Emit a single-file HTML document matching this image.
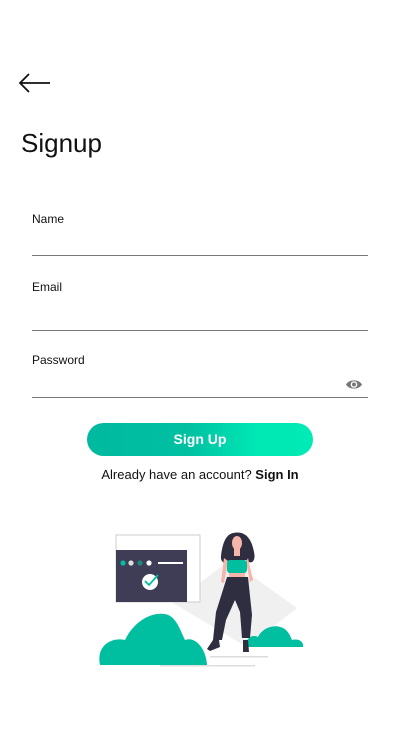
<!DOCTYPE html>
<html><head><style>
body{margin:0;width:400px;height:730px;background:#fff;font-family:"Liberation Sans",sans-serif;position:relative;overflow:hidden;color:#111}
.a{position:absolute}
.lbl{font-size:12px;left:32px}
.ln{left:32px;width:336px;height:1px;background:#777}
</style></head><body>
<svg class="a" style="left:18px;top:72px" width="34" height="22" viewBox="0 0 34 22"><path d="M32 11H2M11 2L2 11l9 9" fill="none" stroke="#111" stroke-width="1.8"/></svg>
<div class="a" style="left:21px;top:128px;font-size:26px;color:#111">Signup</div>
<div class="a lbl" style="top:212px">Name</div>
<div class="a ln" style="top:255px"></div>
<div class="a lbl" style="top:280px">Email</div>
<div class="a ln" style="top:330px"></div>
<div class="a lbl" style="top:353px">Password</div>
<svg class="a" style="left:345px;top:378px" width="18" height="13" viewBox="0 0 18 13"><path d="M1 6.5C4 1 14 1 17 6.5C14 12 4 12 1 6.5Z" fill="#777"/><circle cx="9" cy="6.5" r="3.3" fill="#fff"/><circle cx="9" cy="6.5" r="2" fill="#777"/></svg>
<div class="a ln" style="top:397px"></div>
<div class="a" style="left:87px;top:423px;width:226px;height:33px;border-radius:17px;background:linear-gradient(90deg,#00b9a0 0%,#00c0a2 45%,#00e8b4 75%,#00eab5 100%);color:#fff;font-weight:bold;font-size:14px;text-align:center;line-height:33px">Sign Up</div>
<div class="a" style="left:0;width:400px;top:467px;text-align:center;font-size:13px">Already have an account? <b>Sign In</b></div>
<svg class="a" style="left:0;top:0" width="400" height="730">
<polygon points="230,560 297,608 247,647 173,603" fill="#f0f0f0"/>
<rect x="116" y="535" width="84" height="67" fill="#fff" stroke="#ccc" stroke-width="1"/>
<rect x="116" y="550" width="71" height="52" fill="#3f3d56"/>
<circle cx="123" cy="563" r="2.6" fill="#00bfa0"/><circle cx="131" cy="563" r="2.6" fill="#ddd"/><circle cx="140" cy="563" r="2.6" fill="#1a8a7a"/><circle cx="149" cy="563" r="2.6" fill="#fff"/>
<rect x="158" y="562" width="25" height="2" fill="#fff"/>
<circle cx="150" cy="582" r="8" fill="#fff"/><path d="M145 581l4 4 9-10" fill="none" stroke="#00bfa0" stroke-width="1.8"/>
<path d="M100 665C96 645 112 637 125 640C132 625 148 612 164 614C176 615 180 630 185 640C195 636 206 648 207 665Z" fill="#00bfa0"/>
<path d="M245 647C246 638 252 634 258 637C262 628 276 622 286 630C290 634 291 638 292 640C300 638 304 643 303 647Z" fill="#00bfa0"/>
<rect x="210" y="656" width="58" height="1.5" fill="#ddd"/><rect x="160" y="665" width="95" height="1.5" fill="#ddd"/>
<path d="M233 533C224 535 222 548 221 556C220 562 226 566 230 560L246 560C252 566 256 560 254 552C252 540 246 530 233 533Z" fill="#2f2e41"/>
<ellipse cx="237" cy="543" rx="5" ry="7" fill="#f7b4a8"/>
<rect x="234" y="548" width="6" height="8" fill="#f7b4a8"/>
<path d="M224 558l-3 24 3 1 4-22ZM248 558l5 22-3 2-4-20Z" fill="#f7b4a8"/>
<rect x="227" y="560" width="20" height="13" rx="3" fill="#00bfa0"/>
<rect x="229" y="573" width="16" height="4" fill="#f7b4a8"/>
<path d="M227 577H248L252 615L250 638H242L240 612L235 600L226 620L222 640H213L216 612Z" fill="#2f2e41"/>
<path d="M213 640l-6 9 3 2 10-4-1-7ZM243 640v12h6l-1-12Z" fill="#2f2e41"/>
</svg>
</body></html>
